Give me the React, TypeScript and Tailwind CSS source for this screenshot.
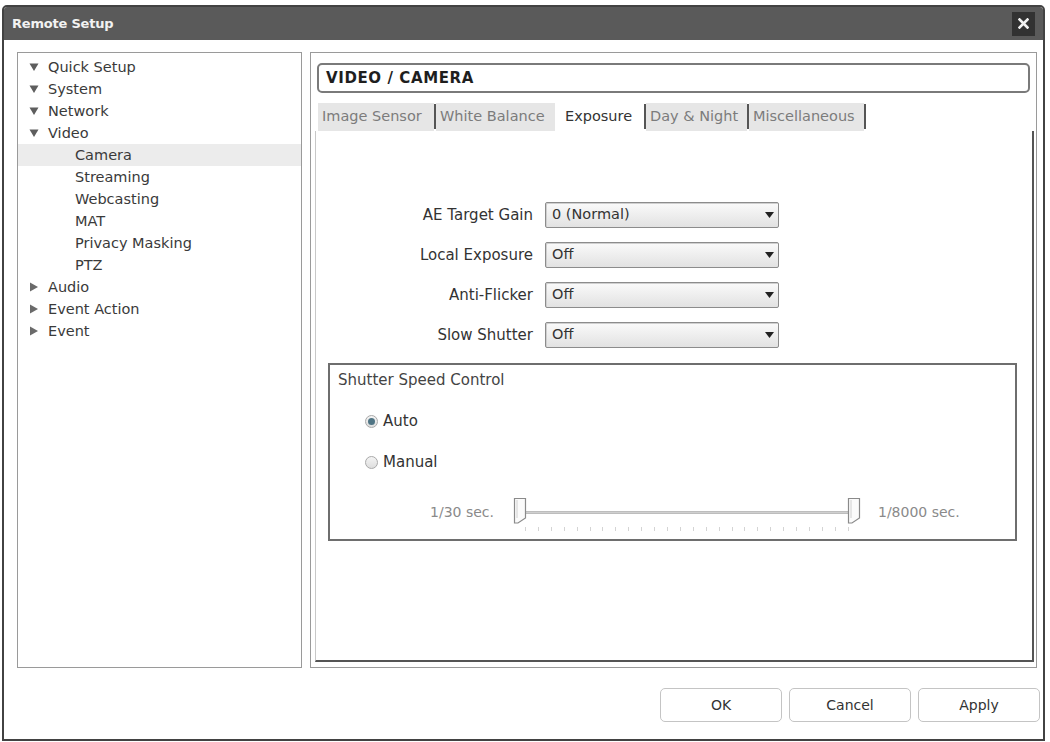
import React from "react";

const treeItems: { label: string; kind: "open" | "closed" | "child"; active?: boolean }[] = [
  { label: "Quick Setup", kind: "open" },
  { label: "System", kind: "open" },
  { label: "Network", kind: "open" },
  { label: "Video", kind: "open" },
  { label: "Camera", kind: "child", active: true },
  { label: "Streaming", kind: "child" },
  { label: "Webcasting", kind: "child" },
  { label: "MAT", kind: "child" },
  { label: "Privacy Masking", kind: "child" },
  { label: "PTZ", kind: "child" },
  { label: "Audio", kind: "closed" },
  { label: "Event Action", kind: "closed" },
  { label: "Event", kind: "closed" },
];

const tabs = [
  { label: "Image Sensor", w: "w-[116px]", sep: true },
  { label: "White Balance", w: "w-[119px]", sep: false },
  { label: "Exposure", w: "w-[89px]", sep: true, active: true },
  { label: "Day & Night", w: "w-[101px]", sep: true },
  { label: "Miscellaneous", w: "w-[115px]", sep: true },
];

const fields = [
  { label: "AE Target Gain", value: "0 (Normal)" },
  { label: "Local Exposure", value: "Off" },
  { label: "Anti-Flicker", value: "Off" },
  { label: "Slow Shutter", value: "Off" },
];

function TreeArrow({ open }: { open: boolean }) {
  return (
    <svg width="10" height="10" viewBox="0 0 10 10" className="shrink-0">
      {open ? (
        <polygon points="0.5,1.5 9.5,1.5 5,9" fill="#5e5e5e" />
      ) : (
        <polygon points="1,0.5 9,5 1,9.5" fill="#6a6a6a" />
      )}
    </svg>
  );
}

function SelectBox({ value }: { value: string }) {
  return (
    <div className="w-[234px] h-[26px] border border-[#8c8c8c] rounded-[2px] bg-gradient-to-b from-[#fafafa] to-[#e2e2e2] flex items-center justify-between pl-[6px] pr-[4px] shadow-[inset_1px_1px_0_#cfcfcf]">
      <span className="text-[14.5px] text-[#333]">{value}</span>
      <svg width="9" height="6" viewBox="0 0 9 6">
        <polygon points="0,0 9,0 4.5,6" fill="#222" />
      </svg>
    </div>
  );
}

function Thumb() {
  return (
    <svg width="14" height="27" viewBox="0 0 14 27">
      <path d="M1.5 1.5 H12.5 V21 L5 26 H1.5 Z" fill="#fbfbfb" stroke="#8a8a8a" strokeWidth="1.2" />
      <path d="M4 3 V21" stroke="#d0d0d0" strokeWidth="1" />
    </svg>
  );
}

function Slider() {
  const ticks = Array.from({ length: 26 });
  return (
    <div className="relative w-[348px] h-[30px]">
      <div className="absolute left-[10px] right-[10px] top-[14px] h-[3px] bg-[#cfcfcf] border-y border-[#bdbdbd]" />
      <div className="absolute left-[12px] right-[12px] top-[30px] h-[4px] flex justify-between">
        {ticks.map((_, i) => (
          <span key={i} className="w-px h-[4px] bg-[#d4d4d4]" />
        ))}
      </div>
      <div className="absolute left-0 top-0">
        <Thumb />
      </div>
      <div className="absolute right-0 top-0">
        <Thumb />
      </div>
    </div>
  );
}

function Radio({ checked, label }: { checked: boolean; label: string }) {
  return (
    <div className="flex items-center h-[20px]">
      <span className="w-[13px] h-[13px] rounded-full border border-[#a9a9a9] bg-gradient-to-b from-[#f4f4f4] to-[#dedede] flex items-center justify-center">
        {checked && <span className="w-[7px] h-[7px] rounded-full bg-[#4f7484]" />}
      </span>
      <span className="ml-[5px] text-[15px] text-[#333]">{label}</span>
    </div>
  );
}

export default function App() {
  return (
    <div
      className="w-[1050px] h-[742px] bg-white pt-[5px] pl-[2px] pr-[5px] pb-[1px]"
      style={{ fontFamily: '"DejaVu Sans", Verdana, sans-serif' }}
    >
      <div className="h-full flex flex-col border-2 border-[#424242] rounded-t-[5px] overflow-hidden">
        {/* title bar */}
        <div className="h-[33px] bg-[#5a5a5a] flex items-center justify-between pl-[8px] pr-[8px]">
          <span className="text-[13px] font-bold text-[#f2f2f2] tracking-[-0.2px]">Remote Setup</span>
          <div className="w-[23px] h-[24px] bg-[#323232] flex items-center justify-center">
            <svg width="11" height="11" viewBox="0 0 11 11">
              <path d="M1.5 1.5 L9.5 9.5 M9.5 1.5 L1.5 9.5" stroke="#f0f0f0" strokeWidth="2.6" strokeLinecap="square" />
            </svg>
          </div>
        </div>

        {/* body */}
        <div className="flex-1 flex flex-col pl-[13px] pr-[6px] pt-[12px]">
          <div className="flex gap-[8px] h-[616px]">
            {/* navigation tree */}
            <div className="w-[285px] border border-[#9a9a9a] pt-[3px] flex flex-col">
              {treeItems.map((it) => (
                <div
                  key={it.label}
                  className={`h-[22px] flex items-center ${it.active ? "bg-[#ececec]" : ""} ${
                    it.kind === "child" ? "pl-[57px]" : "pl-[11px]"
                  }`}
                >
                  {it.kind !== "child" && <TreeArrow open={it.kind === "open"} />}
                  <span className={`text-[14.5px] text-[#3a3a3a] leading-none ${it.kind !== "child" ? "ml-[9px]" : ""}`}>
                    {it.label}
                  </span>
                </div>
              ))}
            </div>

            {/* settings panel */}
            <div className="flex-1 border border-[#9a9a9a] pl-[4px] pr-[2px] pt-[10px] pb-[5px] flex flex-col">
              <div className="ml-[2px] mr-[4px] h-[30px] border-2 border-[#7a7a7a] rounded-[5px] pl-[7px] flex items-center">
                <span className="text-[15px] font-bold text-[#1e1e1e] tracking-[0.6px]">VIDEO / CAMERA</span>
              </div>

              <div className="mt-[10px] ml-[3px] h-[28px] flex">
                {tabs.map((t) => (
                  <div key={t.label} className="flex h-full">
                    <div
                      className={`${t.w} h-full flex items-center ${
                        t.active ? "bg-white text-[#333] pl-[10px]" : "bg-[#e6e6e6] text-[#7c7c7c] pl-[4px]"
                      }`}
                    >
                      <span className="text-[14.5px] whitespace-nowrap">{t.label}</span>
                    </div>
                    {t.sep && <div className="w-[2px] h-[25px] mt-[1px] bg-[#555]" />}
                  </div>
                ))}
              </div>

              <div className="flex-1 border-l border-[#c8c8c8] border-r-2 border-b-2 border-r-[#555] border-b-[#555] pt-[71px] flex flex-col">
                <div className="flex flex-col gap-[14px]">
                  {fields.map((f) => (
                    <div key={f.label} className="flex items-center">
                      <span className="w-[217px] text-right text-[15px] text-[#333]">{f.label}</span>
                      <div className="ml-[12px]">
                        <SelectBox value={f.value} />
                      </div>
                    </div>
                  ))}
                </div>

                <div className="mt-[15px] ml-[12px] w-[689px] h-[178px] border-2 border-[#6e6e6e] flex flex-col pl-[8px] pt-[6px]">
                  <span className="text-[15px] leading-[18px] text-[#444]">Shutter Speed Control</span>
                  <div className="mt-[22px] ml-[27px]">
                    <Radio checked label="Auto" />
                  </div>
                  <div className="mt-[21px] ml-[27px]">
                    <Radio checked={false} label="Manual" />
                  </div>
                  <div className="mt-[25px] flex items-start">
                    <span className="w-[156px] text-right text-[14px] text-[#8a8a8a] mt-[5px]">1/30 sec.</span>
                    <div className="ml-[19px]">
                      <Slider />
                    </div>
                    <span className="ml-[17px] text-[14px] text-[#8a8a8a] mt-[5px]">1/8000 sec.</span>
                  </div>
                </div>
              </div>
            </div>
          </div>

          {/* dialog buttons */}
          <div className="mt-[20px] flex justify-end gap-[7px] -mr-[3px]">
            {["OK", "Cancel", "Apply"].map((b) => (
              <div
                key={b}
                className="w-[122px] h-[34px] border border-[#c4c4c4] rounded-[5px] bg-white flex items-center justify-center text-[14px] text-[#333]"
              >
                {b}
              </div>
            ))}
          </div>
        </div>
      </div>
    </div>
  );
}
